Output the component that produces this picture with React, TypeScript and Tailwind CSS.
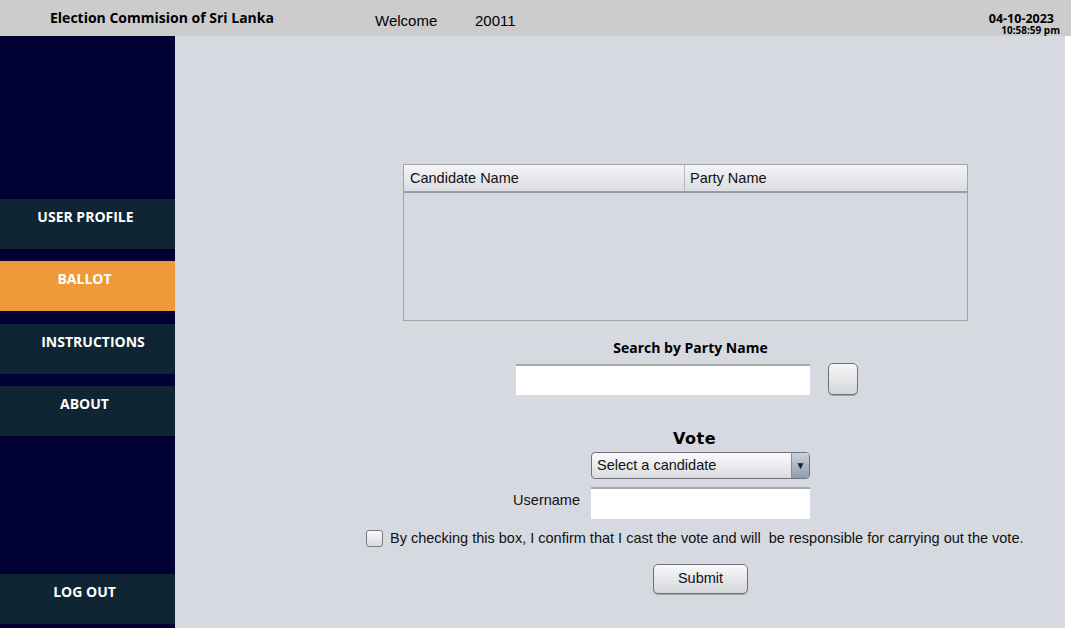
import React, { useState } from 'react';

const navItems = [
  { key: 'profile', label: 'USER PROFILE' },
  { key: 'ballot', label: 'BALLOT' },
  { key: 'instructions', label: 'INSTRUCTIONS' },
  { key: 'about', label: 'ABOUT' },
];

export default function App() {
  const [active, setActive] = useState('ballot');
  const [agree, setAgree] = useState(false);

  return (
    <div className="w-[1071px] h-[631px] bg-white overflow-hidden font-['Liberation_Sans',Arial,sans-serif]">
      {/* Header */}
      <div className="h-[36px] bg-[#cccccc] flex items-center text-black">
        <div className="pl-[50px] w-[375px] font-['Open_Sans',sans-serif] font-bold text-[14px] -mt-[1px]">
          Election Commision of Sri Lanka
        </div>
        <div className="text-[15px] w-[100px] mt-[6px]">Welcome</div>
        <div className="text-[15px] mt-[6px]">20011</div>
        <div className="ml-auto self-start pr-[11px] flex flex-col items-end font-['Open_Sans',sans-serif] font-bold pt-[12px]">
          <span className="text-[12.5px] leading-[13px] mr-[6px]">04-10-2023</span>
          <span className="text-[10px] leading-[10px]">10:58:59 pm</span>
        </div>
      </div>

      <div className="flex h-[592px] w-[1065px]">
        {/* Sidebar */}
        <div className="w-[175px] bg-[#000033] flex flex-col pt-[163px] pb-[4px] font-['Open_Sans',sans-serif]">
          <div className="flex flex-col gap-[12px]">
            {navItems.map((item) => (
              <button
                key={item.key}
                onClick={() => setActive(item.key)}
                className={`h-[50px] w-full text-white font-bold text-[14px] leading-[18px] pt-[9px] flex justify-center items-start ${
                  active === item.key ? 'bg-[#f0993a]' : 'bg-[#0f2533]'
                } ${item.key === 'instructions' ? 'mt-[1px]' : ''}`}
              >
                <span className={item.key === 'instructions' ? 'ml-[11px]' : item.key === 'profile' ? '-ml-[4px]' : '-ml-[6px]'}>
                  {item.label}
                </span>
              </button>
            ))}
          </div>
          <button className="mt-auto h-[50px] w-full bg-[#0f2533] text-white font-bold text-[14px] leading-[18px] pt-[9px] flex justify-center items-start">
            <span className="-ml-[6px]">LOG OUT</span>
          </button>
        </div>

        {/* Main panel */}
        <div className="flex-1 bg-[#d6d9e0] pt-[128px]">
          <div className="ml-[228px] w-[565px]">
            {/* Table */}
            <div className="h-[157px] border border-[#a3a3a3] flex flex-col">
              <div className="h-[28px] flex text-[14.5px] text-[#111] bg-gradient-to-b from-[#f3f4f6] to-[#dcdde2] border-b-2 border-[#9a9da6]">
                <div className="w-[281px] pl-[6px] pt-[1px] flex items-center border-r border-[#b8bac0]">Candidate Name</div>
                <div className="flex-1 pl-[5px] pt-[1px] flex items-center">Party Name</div>
              </div>
              <div className="flex-1 bg-[#d6d9e0]" />
            </div>

            {/* Search */}
            <div className="mt-[18px] text-center font-['Open_Sans',sans-serif] font-bold text-[14px] leading-[18px] ml-[10px]">
              Search by Party Name
            </div>
            <div className="mt-[6px] flex items-center">
              <input className="ml-[113px] w-[294px] h-[31px] bg-white border-t-2 border-[#a8a8a8] outline-none px-1 text-[14px]" />
              <button className="ml-[18px] w-[30px] h-[32px] rounded-[5px] border border-[#6e7176] bg-gradient-to-b from-[#f7f7f8] to-[#d3d5d9] shadow-[0_1px_0_#9ea1a6]" />
            </div>

            {/* Vote */}
            <div className="mt-[34px] text-center font-['DejaVu_Sans',sans-serif] font-bold text-[16px] leading-[20px] ml-[18px] tracking-[0.5px]">
              Vote
            </div>
            <div className="mt-[3px] flex">
              <div className="ml-[188px] w-[219px] h-[27px] rounded-[4px] border border-[#6f7378] bg-gradient-to-b from-[#fbfbfc] to-[#d9dbe0] flex items-center text-[14.5px] text-[#111]">
                <span className="pl-[5px] flex-1">Select a candidate</span>
                <span className="w-[18px] h-full border-l border-[#8a8e95] rounded-r-[3px] bg-gradient-to-b from-[#c9d2de] to-[#8f9db0] flex items-center justify-center text-[10px] text-[#222]">▼</span>
              </div>
            </div>
            <div className="mt-[8px] flex items-start">
              <span className="w-[177px] text-right text-[14.5px] text-[#111] pt-[3px]">Username</span>
              <input className="ml-[11px] w-[219px] h-[32px] bg-white border-t-2 border-[#a8a8a8] outline-none px-1 text-[14px]" />
            </div>

            {/* Confirm */}
            <div className="mt-[9px] -ml-[37px] flex items-center whitespace-nowrap text-[14.5px] text-[#111]">
              <span
                onClick={() => setAgree(!agree)}
                className="shrink-0 inline-block w-[17px] h-[17px] rounded-[3px] border border-[#777a80] bg-gradient-to-b from-[#fafafa] to-[#d8dade] text-center leading-[15px] text-[11px] cursor-pointer"
              >
                {agree ? '✓' : ''}
              </span>
              <span className="ml-[7px]">
                By checking this box, I confirm that I cast the vote and will&nbsp; be responsible for carrying out the vote.
              </span>
            </div>

            <div className="mt-[14px] flex">
              <button className="ml-[250px] w-[95px] h-[30px] rounded-[5px] border border-[#6f7378] bg-gradient-to-b from-[#f8f8f9] to-[#d4d6da] text-[14.5px] text-[#111] shadow-[0_1px_0_#a0a3a8]">
                Submit
              </button>
            </div>
          </div>
        </div>
      </div>
    </div>
  );
}
